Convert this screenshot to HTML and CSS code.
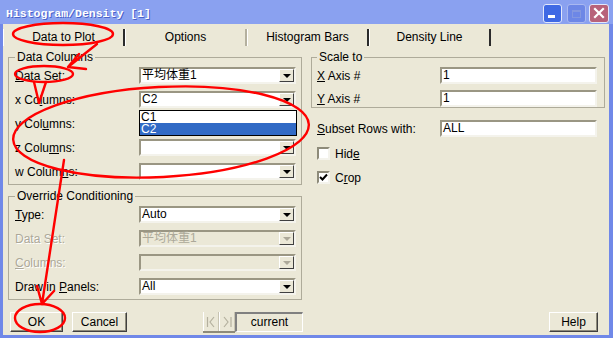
FILE: index.html
```html
<!DOCTYPE html>
<html>
<head>
    <meta charset="utf-8">
    <link rel="stylesheet" href="styles.css">
    <title>Histogram/Density [1]</title>
</head>
<body>
<div class="window">
    <div class="titlebar">
        <span class="title">Histogram/Density [1]</span>
        <div class="caption">
            <span class="cap cap-min"><i></i></span>
            <span class="cap cap-max"><i></i></span>
            <span class="cap cap-close">
                <svg width="18" height="17" viewBox="0 0 18 17"><path d="M5 4 L13 12 M13 4 L5 12" stroke="#fff" stroke-width="2.2" stroke-linecap="square"/></svg>
            </span>
        </div>
    </div>

    <div class="client">
        <div class="tabs">
            <div class="tab">Data to Plot</div>
            <div class="tab light">Options</div>
            <div class="tab">Histogram Bars</div>
            <div class="tab">Density Line</div>
        </div>

        <div class="page">
            <div class="col left">
                <fieldset class="group">
                    <legend>Data Columns</legend>
                    <div class="row"><label><u>D</u>ata Set:</label><div class="combo"><span class="val">平均体重1</span><span class="drop"></span></div></div>
                    <div class="row"><label>x Co<u>l</u>umns:</label>
                        <div class="combo"><span class="val">C2</span><span class="drop"></span>
                            <div class="list">
                                <div>C1</div>
                                <div class="sel">C2</div>
                            </div>
                        </div>
                    </div>
                    <div class="row"><label>y Col<u>u</u>mns:</label><div class="combo"><span class="val"></span><span class="drop"></span></div></div>
                    <div class="row"><label>z Colu<u>m</u>ns:</label><div class="combo"><span class="val"></span><span class="drop"></span></div></div>
                    <div class="row"><label>w Colum<u>n</u>s:</label><div class="combo"><span class="val"></span><span class="drop"></span></div></div>
                </fieldset>

                <fieldset class="group">
                    <legend>Override Conditioning</legend>
                    <div class="row"><label><u>T</u>ype:</label><div class="combo"><span class="val">Auto</span><span class="drop"></span></div></div>
                    <div class="row"><label class="dim">Data Set:</label><div class="combo off"><span class="val">平均体重1</span><span class="drop"></span></div></div>
                    <div class="row"><label class="dim"><u>C</u>olumns:</label><div class="combo off"><span class="val"></span><span class="drop"></span></div></div>
                    <div class="row"><label>Draw in <u>P</u>anels:</label><div class="combo"><span class="val">All</span><span class="drop"></span></div></div>
                </fieldset>
            </div>

            <div class="col right">
                <fieldset class="group scale">
                    <legend>Scale to</legend>
                    <div class="row"><label><u>X</u> Axis #</label><div class="field">1</div></div>
                    <div class="row"><label><u>Y</u> Axis #</label><div class="field">1</div></div>
                </fieldset>

                <div class="row subset"><label><u>S</u>ubset Rows with:</label><div class="field">ALL</div></div>

                <div class="check first"><span class="box"></span>Hid<u>e</u></div>
                <div class="check"><span class="box"><svg width="9" height="9" viewBox="0 0 9 9"><path d="M1 4 L3.5 6.5 L8 1.5" fill="none" stroke="#000" stroke-width="2"/></svg></span>C<u>r</u>op</div>
            </div>
        </div>

        <div class="footer">
            <div class="btn ok">OK</div>
            <div class="btn cancel">Cancel</div>
            <div class="nav">
                <span class="navbtn"><svg width="14" height="18" viewBox="0 0 14 18"><path d="M3.5 4 V14 M10 4 L6 9 L10 14" fill="none" stroke="#b4b09e" stroke-width="1.2"/></svg></span>
                <span class="navbtn"><svg width="14" height="18" viewBox="0 0 14 18"><path d="M4 4 L8 9 L4 14 M11 4 V14" fill="none" stroke="#b4b09e" stroke-width="1.2"/></svg></span>
            </div>
            <div class="current">current</div>
            <div class="btn help">Help</div>
        </div>
    </div>

    <!-- red hand-drawn marks over the dialog -->
    <svg class="marks" width="613" height="338" viewBox="0 0 613 338">
        <g fill="none" stroke="#f00" stroke-width="2.4" stroke-linecap="round" stroke-linejoin="round">
            <ellipse cx="63" cy="34" rx="50" ry="11"/>
            <path d="M97 44 L68 67 L86 69 M68 67 L79 54"/>
            <ellipse cx="44" cy="74" rx="29" ry="8"/>
            <path d="M34 82 L39 103 L46 82"/>
            <ellipse cx="161" cy="132" rx="148" ry="45" transform="rotate(-3 161 132)"/>
            <path d="M64 160 L42 304 M37 286 L42 304 L54 291"/>
            <ellipse cx="40" cy="318" rx="25" ry="14"/>
        </g>
    </svg>
</div>
</body>
</html>
```

FILE: styles.css
```css
* {
    box-sizing: border-box;
}

body {
    margin: 0;
    font-family: "Liberation Sans", "Noto Sans CJK JP", sans-serif;
    font-size: 12px;
    color: #000;
}

.window {
    position: relative;
    width: 613px;
    height: 338px;
    background: #7088e8;
    display: flex;
    flex-direction: column;
    padding: 0 4px 3px 3px;
}

/* title bar */
.titlebar {
    height: 24px;
    margin: 0 -4px 0 -3px;
    padding: 2px 4px 0 6px;
    background: #8aa1f0;
    display: flex;
    align-items: center;
    justify-content: space-between;
}

.title {
    font-family: "Liberation Mono", monospace;
    font-weight: bold;
    font-size: 11.5px;
    color: #fff;
    text-shadow: 1px 1px 0 #4a62c8;
}

.caption {
    display: flex;
    align-self: flex-start;
    margin-top: 2px;
}

.cap {
    width: 19px;
    height: 19px;
    border: 1px solid #e2e8fb;
    border-radius: 3px;
    display: flex;
}

.cap-min {
    background: #3f69e4;
    margin-right: 5px;
}

.cap-min i {
    width: 7px;
    height: 3px;
    background: #fff;
    margin: auto 0 4px 4px;
}

.cap-max {
    background: #6d87e6;
    border-color: #a9b8f0;
    margin-right: 3px;
}

.cap-max i {
    width: 9px;
    height: 8px;
    margin: auto;
    border: 1px solid #8397e0;
    border-top-width: 2px;
}

.cap-close {
    width: 20px;
    background: #b8627a;
}

/* dialog body */
.client {
    flex: 1;
    background: #ebe8d7;
    display: flex;
    flex-direction: column;
}

.tabs {
    height: 24px;
    display: flex;
    align-items: flex-end;
    padding-bottom: 2px;
}

.tab {
    width: 122px;
    height: 17px;
    line-height: 16px;
    text-align: center;
    border-left: 1px solid #fff;
    border-right: 2px solid #2b2b2b;
}

.tab.light {
    border-right-color: #b4b09e;
}

.page {
    height: 256px;
    display: flex;
    gap: 9px;
    padding: 3px 4px 0 5px;
}

.col {
    width: 294px;
    display: flex;
    flex-direction: column;
}

.left {
    gap: 5px;
}

.group {
    margin: 0;
    min-width: 0;
    padding: 4px 5px 4px 6px;
    border: 1px solid #aeab9a;
    display: flex;
    flex-direction: column;
    gap: 7px;
}

.group legend {
    padding: 0 2px;
    line-height: 12px;
}

.row {
    display: flex;
    align-items: center;
    height: 17px;
}

.row label {
    width: 124px;
    white-space: nowrap;
}

.row label.dim {
    color: #aca899;
    text-shadow: 1px 1px 0 #fff;
}

.combo,
.field {
    position: relative;
    width: 157px;
    height: 17px;
    background: #fff;
    border: 2px solid;
    border-color: #9a9683 #f4f3ec #f4f3ec #9a9683;
}

.combo {
    display: flex;
    align-items: center;
}

.combo .val {
    flex: 1;
    padding-left: 1px;
    line-height: 13px;
    white-space: nowrap;
}

.drop {
    width: 15px;
    height: 13px;
    background: #ebe8d7;
    border: 1px solid;
    border-color: #fff #404040 #404040 #fff;
    display: flex;
    align-items: center;
    justify-content: center;
}

.drop::after {
    content: "";
    border-top: 4px solid #000;
    border-left: 4px solid transparent;
    border-right: 4px solid transparent;
}

.combo.off {
    background: #ebe8d7;
    color: #aca899;
}

.combo.off .drop::after {
    border-top-color: #aca899;
}

.list {
    position: absolute;
    left: -2px;
    top: 17px;
    width: 158px;
    border: 1px solid #000;
    background: #fff;
    z-index: 2;
}

.list div {
    height: 12px;
    line-height: 12px;
    padding-left: 1px;
}

.list .sel {
    background: #316ac5;
    color: #fff;
}

.field {
    padding-left: 1px;
    line-height: 13px;
}

/* right column */
.scale {
    padding: 4px 7px 0 5px;
    gap: 6px;
}

.scale .row label,
.subset label {
    width: 123px;
}

.subset {
    margin-top: 12px;
    padding-left: 6px;
}

.check {
    display: flex;
    align-items: center;
    height: 13px;
    padding-left: 6px;
    margin-top: 11px;
}

.check.first {
    margin-top: 10px;
}

.box {
    width: 13px;
    height: 13px;
    margin-right: 5px;
    background: #fff;
    border: 2px solid;
    border-color: #8e8b7a #f4f3ec #f4f3ec #8e8b7a;
    display: flex;
    align-items: center;
    justify-content: center;
}

/* bottom buttons */
.footer {
    height: 31px;
    display: flex;
    align-items: flex-start;
    padding: 8px 11px 0 7px;
}

.btn {
    height: 20px;
    line-height: 18px;
    text-align: center;
    background: #ebe8d7;
    border: 1px solid;
    border-color: #fff #404040 #404040 #fff;
    box-shadow: inset -1px -1px 0 #8e8b7a;
}

.ok {
    width: 53px;
}

.cancel {
    width: 55px;
    margin-left: 9px;
}

.nav {
    display: flex;
    margin-left: 76px;
    border-bottom: 2px solid #8e8b7a;
    height: 21px;
}

.navbtn {
    width: 16px;
    height: 19px;
    border-left: 1px solid #fff;
    border-right: 1px solid #c8c4b2;
    display: flex;
    align-items: center;
    justify-content: center;
}

.current {
    width: 68px;
    height: 20px;
    line-height: 17px;
    text-align: center;
    border-top: 2px solid #808080;
    border-left: 2px solid #808080;
    border-right: 1px solid #fff;
    border-bottom: 1px solid #fff;
}

.help {
    width: 49px;
    margin-left: auto;
}

.marks {
    position: absolute;
    left: 0;
    top: 0;
    pointer-events: none;
}
```
